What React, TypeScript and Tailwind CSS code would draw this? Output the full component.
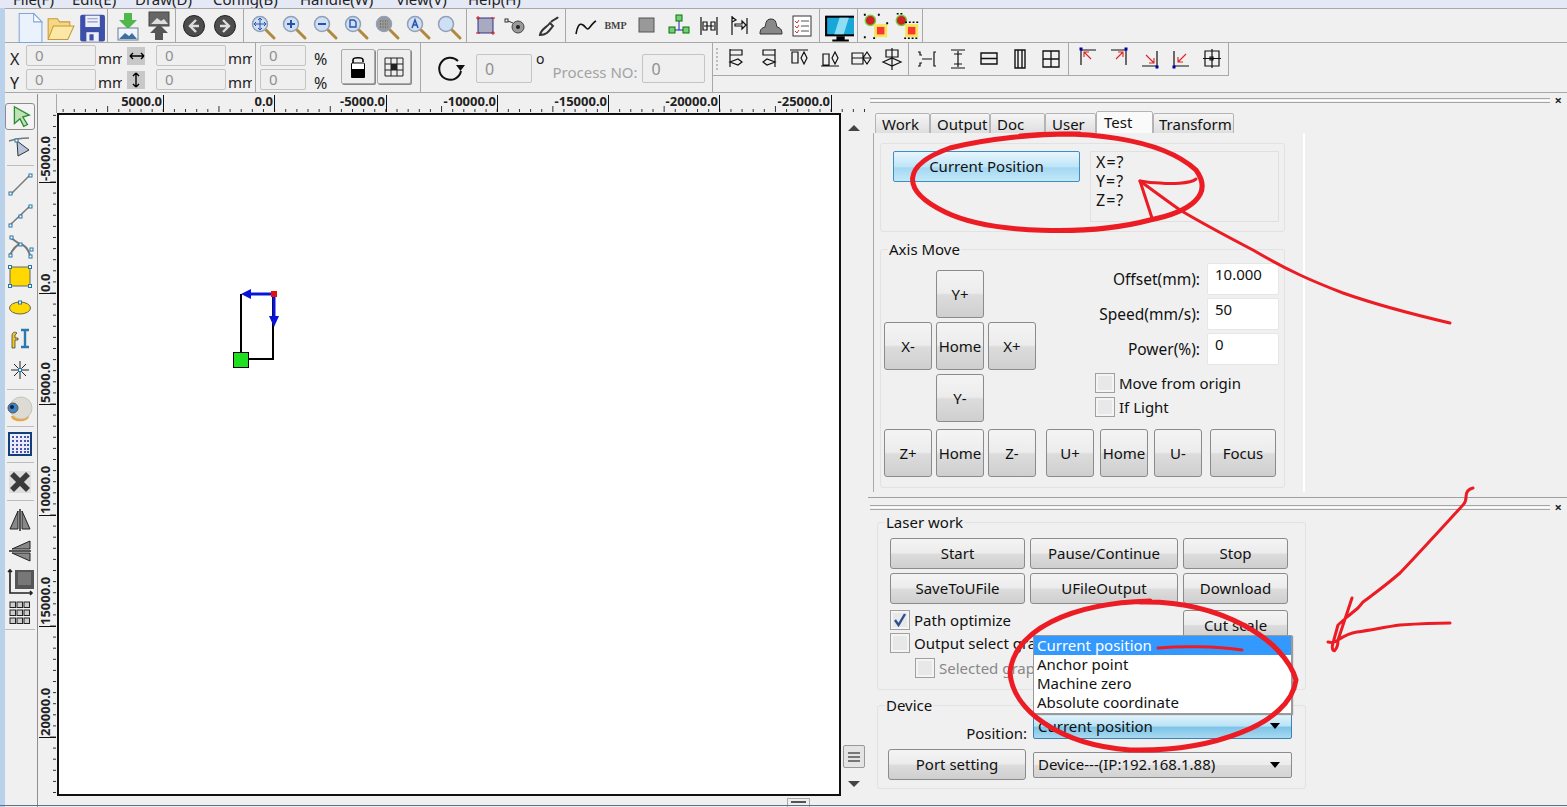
import type { ReactNode } from "react";

const BTN =
  "flex items-center justify-center rounded-[3px] border border-[#8b8b8b] bg-[linear-gradient(#f4f4f4_0%,#ececec_48%,#dcdcdc_52%,#cfcfcf_100%)] text-[#111] leading-none";

// ---------- toolbar icons ----------
const Svg = ({ children, s = 30 }: { children: ReactNode; s?: number }) => (
  <svg width={s} height={s} viewBox="0 0 30 30" fill="none">
    {children}
  </svg>
);

const Mag = ({ inner, color = "#cfe0f5" }: { inner?: ReactNode; color?: string }) => (
  <Svg>
    <path d="M19 19l8 8" stroke="#b08a3c" strokeWidth="3" strokeLinecap="round" />
    <circle cx="13" cy="13" r="7.5" fill={color} stroke="#8fa0b8" strokeWidth="1.5" />
    {inner}
  </Svg>
);

const Plain = ({ d, w = 1.2 }: { d: string; w?: number }) => (
  <Svg>
    <path d={d} stroke="#111" strokeWidth={w} />
  </Svg>
);

const Corner = ({ d, dot, arrow }: { d: string; dot: [number, number]; arrow: string }) => (
  <Svg>
    <path d={d} stroke="#111" strokeWidth="1.2" />
    <path d={arrow} stroke="#d22" strokeWidth="1.1" />
    <rect x={dot[0] - 1.5} y={dot[1] - 1.5} width="3" height="3" fill="#00a" />
  </Svg>
);

const icons: Record<string, ReactNode> = {
  new: (
    <Svg s={34}>
      <path d="M6 3h14l8 8v20H6z" fill="#eaf3fd" stroke="#7fa6d6" />
      <path d="M20 3v8h8z" fill="#fff" stroke="#7fa6d6" />
    </Svg>
  ),
  open: (
    <Svg s={34}>
      <path d="M4 27V8h9l2 3h10v4" fill="#f5d784" stroke="#c69a3a" />
      <path d="M4 28l5-13h20l-6 13z" fill="#fbe7a6" stroke="#c69a3a" />
    </Svg>
  ),
  save: (
    <Svg s={34}>
      <rect x="5" y="4" width="24" height="26" rx="2" fill="#3d4fa8" />
      <rect x="10" y="5" width="14" height="11" fill="#eef0f8" />
      <path d="M12 8h10M12 11h10" stroke="#8b95c8" />
      <rect x="11" y="21" width="12" height="9" fill="#eef0f8" />
      <rect x="14" y="23" width="4" height="6" fill="#3d4fa8" />
    </Svg>
  ),
  imp: (
    <Svg>
      <path d="M11 2h8v7h5l-9 9-9-9h5z" fill="#4fb84a" />
      <rect x="5" y="17" width="20" height="12" fill="#eef4fb" stroke="#6b7a8c" />
      <path d="M6 28l6-6 4 3 3-3 5 6z" fill="#3f6f9f" />
    </Svg>
  ),
  exp: (
    <Svg>
      <rect x="5" y="1" width="20" height="14" fill="#666" stroke="#444" />
      <path d="M7 13l6-6 4 3 3-2 4 5z" fill="#ddd" />
      <path d="M15 13l9 9h-5v7h-8v-7H6z" fill="#555" />
    </Svg>
  ),
  back: (
    <Svg>
      <circle cx="15" cy="15" r="10.5" fill="#4d4d4d" stroke="#222" />
      <path d="M17 9l-6 6 6 6M11 15h9" stroke="#ddd" strokeWidth="2.4" />
    </Svg>
  ),
  fwd: (
    <Svg>
      <circle cx="15" cy="15" r="10.5" fill="#4d4d4d" stroke="#222" />
      <path d="M13 9l6 6-6 6M19 15h-9" stroke="#ddd" strokeWidth="2.4" />
    </Svg>
  ),
  z1: <Mag inner={<path d="M13 8v10M8 13h10M11 9l2-2 2 2M11 17l2 2 2-2M9 11l-2 2 2 2M17 11l2 2-2 2" stroke="#2a52a8" />} />,
  z2: <Mag inner={<path d="M9 13h8M13 9v8" stroke="#2a52a8" strokeWidth="2" />} />,
  z3: <Mag inner={<path d="M9 13h8" stroke="#2a52a8" strokeWidth="2" />} />,
  z4: <Mag inner={<path d="M10 9h4l2 2v5h-6z" stroke="#2a52a8" strokeWidth="1.4" />} />,
  z5: <Mag color="#999" inner={<path d="M9 10h8M9 13h8M9 16h8" stroke="#555" strokeDasharray="1 1.5" />} />,
  z6: <Mag inner={<path d="M10 17l3-8 3 8M11 14h4" stroke="#2a52a8" strokeWidth="1.5" />} />,
  z7: <Mag />,
  sel: (
    <Svg>
      <rect x="7" y="7" width="15" height="15" fill="#a9a9c0" stroke="#33338a" />
      <path d="M5 7h4M7 5v4M20 22h4M22 20v4M20 7h4M5 22h4" stroke="#c22" />
    </Svg>
  ),
  spot: (
    <Svg>
      <rect x="3" y="8" width="3" height="3" stroke="#333" />
      <path d="M6 10l5 2" stroke="#333" />
      <circle cx="16" cy="16" r="6" fill="#999" stroke="#444" />
      <circle cx="16" cy="16" r="2" fill="#222" />
    </Svg>
  ),
  brush: (
    <Svg>
      <path d="M7 24c1-6 6-7 10-12l3 3c-4 5-6 9-13 9zM18 11c3-3 6-3 7-5" stroke="#333" strokeWidth="2" />
    </Svg>
  ),
  curve: <Plain d="M6 23c1-6 3-12 7-9s4 6 7 2 4-5 6-6" w={1.6} />,
  square: (
    <Svg>
      <rect x="7" y="7" width="15" height="14" fill="#999" stroke="#555" />
    </Svg>
  ),
  tree: (
    <Svg>
      <rect x="13" y="4" width="6" height="6" fill="#7c7" stroke="#070" />
      <rect x="6" y="16" width="6" height="6" fill="#7c7" stroke="#070" />
      <rect x="20" y="16" width="6" height="6" fill="#7c7" stroke="#070" />
      <path d="M16 10v9M12 19h8" stroke="#22a" />
    </Svg>
  ),
  dist: <Plain d="M7 6v18M23 6v18M10 15h10M9 11h4v8H9zM17 11h4v8h-4z" />,
  flag: <Plain d="M7 5v19M22 7v16M7 6l4 3-4 2M10 13h7v-3l4 4-4 4v-3h-7z" />,
  stamp: (
    <Svg>
      <path d="M4 23c0-5 2-6 5-7 1-2 0-8 6-8s5 6 6 8c3 1 5 2 5 7z" fill="#888" stroke="#333" />
    </Svg>
  ),
  check: (
    <Svg>
      <rect x="6" y="5" width="18" height="20" fill="#fff" stroke="#333" />
      <path d="M8 10l2 2 2-3M8 15l2 2 2-3M8 20l2 2 2-3" stroke="#c33" />
      <path d="M14 10h8M14 15h8M14 20h8" stroke="#555" />
    </Svg>
  ),
  monitor: (
    <Svg s={34}>
      <rect x="3" y="6" width="28" height="18" fill="#18a7d8" stroke="#000" strokeWidth="2" />
      <path d="M16 7l9 0-5 16h-9z" fill="#8fdcf5" />
      <path d="M13 25h8v3h4v2H9v-2h4z" fill="#000" />
    </Svg>
  ),
  node1: (
    <Svg s={28}>
      <circle cx="9" cy="9" r="5.500" fill="#c22" stroke="#7c4" strokeWidth="1.5" />
      <rect x="13" y="13" width="14" height="14" fill="#f6e55c" />
      <rect x="16" y="16" width="8" height="8" fill="#f33" />
      <path d="M2 3h2M17 3h2M2 27h2M12 28h2M26 12h2" stroke="#000" strokeWidth="2" />
    </Svg>
  ),
  node2: (
    <Svg s={28}>
      <circle cx="9" cy="9" r="5.500" fill="#c22" stroke="#7c4" strokeWidth="1.5" />
      <rect x="13" y="13" width="14" height="14" fill="#f6e55c" />
      <rect x="16" y="16" width="8" height="8" fill="#f33" />
      <path d="M4 2h8M13 11h15M12 28h16" stroke="#000" strokeWidth="1.6" strokeDasharray="2 2" />
    </Svg>
  ),
  a1: <Plain d="M8 5v18M8 6h12v5H8M8 18l8-3 4 3-4 3z" />,
  a2: <Plain d="M22 5v18M22 6H10v5h12M22 18l-8-3-4 3 4 3z" />,
  a3: <Plain d="M6 6h18M8 8h6v11H8zM20 8l3 6-3 6-3-6z" />,
  a4: <Plain d="M6 22h18M8 10h6v11H8zM20 8l3 6-3 6-3-6z" />,
  a5: <Plain d="M6 9h11v11H6zM6 14h18M21 8l4 6-4 6-4-6z" />,
  a6: <Plain d="M15 4v22M9 6h12v7H9zM6 18l9-4 9 4-9 4z" />,
  s1: <Plain d="M6 8l2 0v3h2M6 22l2 0v-3h2M24 8h-2v14h2M10 15h10" />,
  s2: <Plain d="M8 6h14M8 24h14M15 7v16M11 10h8M11 20h8" />,
  s3: <Plain d="M7 9h16v11H7zM7 14.5h16" w={1.4} />,
  s4: <Plain d="M10 6h10v18H10zM13 6v18M17 6v18" w={1.4} />,
  s5: <Plain d="M7 7h16v16H7zM15 7v16M7 15h16M12 15h6M15 12v6" w={1.3} />,
  c1: <Corner d="M8 5v16M8 6h15" dot={[8, 5]} arrow="M18 15l-7-7M11 13V8h5" />,
  c2: <Corner d="M22 5v16M7 6h15" dot={[22, 5]} arrow="M12 15l7-7M14 8h5v5" />,
  c3: <Corner d="M22 7v16M7 22h15" dot={[22, 23]} arrow="M11 11l8 8M19 14v5h-5" />,
  c4: <Corner d="M8 7v16M8 22h15" dot={[8, 23]} arrow="M20 10l-8 8M12 13v5h5" />,
  c5: <Plain d="M8 7h14v15H8zM15 5v19M6 14.5h18M13 13h3v3h-3z" />,
  arrow: (
    <Svg>
      <path d="M9 4l16 9-7 2 5 8-4 2-4-8-6 5z" fill="#bfe3b4" stroke="#2c8a34" strokeWidth="1.4" />
    </Svg>
  ),
  node: (
    <Svg>
      <path d="M12 8l12 9-11 6z" fill="#b8c4dc" stroke="#333" />
      <path d="M4 8c6-2 13-3 20-3" stroke="#777" strokeWidth="1.5" />
      <rect x="10" y="6" width="3" height="3" fill="#fff" stroke="#27a" />
    </Svg>
  ),
  line: (
    <Svg>
      <path d="M6 25L25 6" stroke="#777" strokeWidth="1.5" />
      <rect x="4" y="23" width="3" height="3" fill="#fff" stroke="#27a" />
      <rect x="24" y="5" width="3" height="3" fill="#fff" stroke="#27a" />
    </Svg>
  ),
  poly: (
    <Svg>
      <path d="M5 25L25 6" stroke="#777" strokeWidth="1.5" />
      {[[4, 24], [14, 15], [24, 5]].map(([x, y]) => (
        <rect key={x} x={x} y={y} width="3" height="3" fill="#fff" stroke="#27a" />
      ))}
    </Svg>
  ),
  cross: (
    <Svg>
      <path d="M5 24c3-6 7-10 10-11 5 1 8 5 10 11M6 7l10 7" stroke="#777" strokeWidth="2" />
      {[[4, 23], [5, 5], [14, 12], [25, 17], [24, 24]].map(([x, y]) => (
        <rect key={x + "-" + y} x={x} y={y} width="3" height="3" fill="#fff" stroke="#27a" />
      ))}
    </Svg>
  ),
  rect: (
    <Svg>
      <rect x="5" y="5" width="20" height="19" fill="#ffd800" stroke="#667" />
      {[[3.5, 3.5], [23.5, 3.5], [3.5, 22.5], [23.5, 22.5]].map(([x, y]) => (
        <rect key={x + "-" + y} x={x} y={y} width="3" height="3" fill="#fff" stroke="#27a" />
      ))}
    </Svg>
  ),
  ellipse: (
    <Svg>
      <ellipse cx="15" cy="15" rx="10.5" ry="6" fill="#ffd800" stroke="#665" />
      <rect x="13.5" y="8" width="3" height="3" fill="#fff" stroke="#27a" />
    </Svg>
  ),
  text: (
    <Svg>
      <path d="M12 9c-3-2-5 0-5 3v12h3v-8h3v-2h-3v-3z" fill="#f0c828" stroke="#333" strokeWidth=".7" />
      <path d="M16 6h8M16 23h8M20 6v17" stroke="#2a7ab0" strokeWidth="2.4" />
    </Svg>
  ),
  star: (
    <Svg>
      <path d="M15 6v18M6 15h18M9 9l12 12M21 9L9 21" stroke="#222" />
      <rect x="13.5" y="13.5" width="3" height="3" fill="#fff" stroke="#27a" />
    </Svg>
  ),
  camera: (
    <Svg>
      <path d="M6 21c0 7 18 7 18 0z" fill="#f0a53a" />
      <circle cx="16" cy="13" r="11" fill="#dcdcd4" stroke="#c4c4bc" />
      <circle cx="8" cy="13" r="5" fill="#3f83c8" stroke="#555" />
      <circle cx="7" cy="12" r="2" fill="#123" />
    </Svg>
  ),
  grid: (
    <svg width="24" height="24" viewBox="0 0 24 24">
      <rect x="1" y="1" width="22" height="22" fill="#e9ecf8" stroke="#123f7c" strokeWidth="2" />
      {[5, 9, 13, 17, 20].flatMap((x) =>
        [5, 9, 13, 17, 20].map((y) => <rect key={x + "-" + y} x={x - 1} y={y - 1} width="2" height="2" fill="#4a55a8" />),
      )}
    </svg>
  ),
  del: (
    <Svg>
      <rect x="4" y="4" width="22" height="22" fill="#ddd" />
      <path d="M7 7l16 16M23 7L7 23" stroke="#3a3a3a" strokeWidth="5.5" />
    </Svg>
  ),
  mirrorH: (
    <Svg>
      <path d="M15 4v22" stroke="#222" strokeWidth="1.5" />
      <path d="M13 6v18H5zM17 6v18h8z" fill="#888" stroke="#222" />
    </Svg>
  ),
  mirrorV: (
    <Svg>
      <path d="M4 15h22" stroke="#222" strokeWidth="1.5" />
      <path d="M25 5v8H7zM25 17v8L7 17z" fill="#888" stroke="#222" />
    </Svg>
  ),
  matrix: (
    <Svg>
      <rect x="10" y="3" width="19" height="19" fill="#555" />
      <rect x="13" y="5" width="13" height="13" fill="#777" />
      <path d="M5 3v23h22M3 5l2-2 2 2M25 24l2 2-2 2" stroke="#222" strokeWidth="1.6" />
    </Svg>
  ),
  array: (
    <svg width="22" height="24" viewBox="0 0 22 24">
      {[1, 8, 15].flatMap((x) =>
        [1, 9, 17].map((y) => <rect key={x + "-" + y} x={x} y={y} width="5.5" height="5.5" fill="#ccc" stroke="#222" />),
      )}
    </svg>
  ),
};

const Tool = ({ name }: { name: string }) => (
  <div className="flex h-full w-[31px] shrink-0 items-center justify-center">{icons[name]}</div>
);

const Sep = ({ className }: { className: string }) => <div className={`w-px shrink-0 self-stretch bg-[#a8a8a8] ${className}`} />;

// ---------- form bits ----------
const Grey = ({ v, className }: { v: string; className: string }) => (
  <div className={`flex items-center rounded-[2px] border border-[#c4c4c4] bg-[#efefef] pl-2 text-[#8f8f8f] ${className}`}>{v}</div>
);

const Check = ({ label, on, dim, className = "" }: { label: string; on?: boolean; dim?: boolean; className?: string }) => (
  <div className={`flex items-center gap-[4px] leading-[20px] ${className}`}>
    <div className="flex h-5 w-5 shrink-0 items-center justify-center border border-[#a0a0a0] bg-[#e8e8e8] shadow-[inset_0_0_0_2px_#f4f4f4]">
      {on && (
        <svg width="14" height="14" viewBox="0 0 14 14">
          <path d="M2 7l3.5 5L12 1" stroke="#2f4f8f" strokeWidth="2.4" fill="none" />
        </svg>
      )}
    </div>
    <span className={dim ? "whitespace-nowrap text-[#888]" : "whitespace-nowrap text-[#111]"}>{label}</span>
  </div>
);

const Group = ({ title, className, children }: { title?: string; className: string; children: ReactNode }) => (
  <div className={`relative rounded-[3px] border border-[#e2e2e2] ${className}`}>
    {title && <span className="absolute -top-[10px] left-[7px] bg-[#f0f0f0] px-[1px] leading-[18px] text-[#111]">{title}</span>}
    {children}
  </div>
);

const Square = ({ t }: { t: string }) => <button className={`${BTN} h-12 w-12 px-0 text-[15px]`}>{t}</button>;

const Field = ({ label, v }: { label: string; v: string }) => (
  <div className="flex h-[32px] items-center justify-end gap-[7px]">
    <span className="mt-[2px] text-[15.5px] text-[#111]">{label}</span>
    <div className="h-[32px] w-[72px] rounded-[2px] border border-[#e6e6e6] bg-white pl-[7px] leading-[20px] text-[#111]">{v}</div>
  </div>
);

const Combo = ({ t, blue, className }: { t: string; blue?: boolean; className: string }) => (
  <div
    className={`flex h-[26px] w-[259px] items-center justify-between rounded-[2px] border pl-1 pr-[11px] text-[#111] ${className} ${
      blue
        ? "border-[#3b82b5] bg-[linear-gradient(#e6f5fc_0%,#b9e2f5_50%,#7cc4e8_55%,#a9d9f0_100%)]"
        : "border-[#8b8b8b] bg-[linear-gradient(#f4f4f4_0%,#ececec_48%,#dcdcdc_52%,#d4d4d4_100%)]"
    }`}
  >
    <span>{t}</span>
    <span className="h-0 w-0 border-x-[5px] border-t-[6px] border-x-transparent border-t-black" />
  </div>
);

const Grips = ({ className }: { className: string }) => (
  <div className={`flex items-center pl-[2px] pr-[5px] ${className}`}>
    <div className="flex-1 border-y border-[#a6a6a6] py-[1px]">
      <div className="h-[1px] bg-white" />
    </div>
    <span className="ml-[5px] text-[13px] font-bold leading-none text-[#222]">×</span>
  </div>
);

const menus = [
  ["File(F)", "w-[59px]"],
  ["Edit(E)", "w-[63px]"],
  ["Draw(D)", "w-[78px]"],
  ["Config(B)", "w-[87px]"],
  ["Handle(W)", "w-[96px]"],
  ["View(V)", "w-[72px]"],
  ["Help(H)", "w-[72px]"],
];

const hMajors = [
  { x: 106, t: "5000.0" },
  { x: 217, t: "0.0" },
  { x: 329, t: "-5000.0" },
  { x: 440, t: "-10000.0" },
  { x: 551, t: "-15000.0" },
  { x: 662, t: "-20000.0" },
  { x: 774, t: "-25000.0" },
];
const vMajors = [
  { y: 69, t: "-5000.0" },
  { y: 180, t: "0.0" },
  { y: 291, t: "5000.0" },
  { y: 402, t: "10000.0" },
  { y: 513, t: "15000.0" },
  { y: 624, t: "20000.0" },
];

const HRuler = () => (
  <svg width="809" height="19" className="block">
    {Array.from({ length: 74 }, (_, i) => {
      const x = -5 + i * 11.13;
      const tall = i % 5 === 0 && i % 10 !== 0;
      return <path key={i} d={`M${x} ${tall ? 12 : 15}V18`} stroke="#333" />;
    })}
    {hMajors.map((m) => (
      <g key={m.x}>
        <path d={`M${m.x + 0.5} 1V18`} stroke="#111" />
        <text x={m.x - 1} y={12} textAnchor="end" fontSize="13" fontWeight="700" fill="#222" fontFamily="Noto Sans, sans-serif">
          {m.t}
        </text>
      </g>
    ))}
  </svg>
);

const VRuler = () => (
  <svg width="19" height="683" className="block">
    {Array.from({ length: 62 }, (_, i) => {
      const y = 2.4 + i * 11.1;
      const tall = i % 5 === 1 && i % 10 !== 1;
      return <path key={i} d={`M${tall ? 12 : 15} ${y}H18`} stroke="#333" />;
    })}
    {vMajors.map((m) => (
      <g key={m.y}>
        <path d={`M1 ${m.y + 0.5}H18`} stroke="#111" />
        <text
          transform={`translate(12 ${m.y - 1}) rotate(-90)`}
          fontSize="13"
          fontWeight="700"
          fill="#222"
          fontFamily="Noto Sans, sans-serif"
        >
          {m.t}
        </text>
      </g>
    ))}
  </svg>
);

export default function App() {
  return (
    <div className="relative flex h-[807px] w-[1567px] flex-col overflow-hidden bg-[#f0f0f0] font-['Noto_Sans',sans-serif] text-[15px]">
      {/* menu, cut off by the top of the picture */}
      <div className="flex h-[8px] shrink-0 items-end overflow-hidden bg-[#e4e9f5] pb-[3px] pl-[13px] leading-[12px] text-[#222]">
        {menus.map(([t, w]) => (
          <span key={t} className={`shrink-0 ${w}`}>
            {t}
          </span>
        ))}
      </div>

      <div className="flex min-h-0 flex-1">
        <div className="w-[5px] shrink-0 bg-[#b9d1ea]" />

        <div className="flex min-w-0 flex-1 flex-col">
          {/* main toolbar */}
          <div className="flex h-[35px] shrink-0 items-center border-y border-[#a8a8a8] pl-[8px]">
            {["new", "open", "save"].map((n) => <Tool key={n} name={n} />)}
            <Sep className="ml-px mr-1" />
            {["imp", "exp"].map((n) => <Tool key={n} name={n} />)}
            <Sep className="ml-px mr-[2px]" />
            {["back", "fwd"].map((n) => <Tool key={n} name={n} />)}
            <Sep className="ml-[3px] mr-[2px]" />
            {["z1", "z2", "z3", "z4", "z5", "z6", "z7"].map((n) => <Tool key={n} name={n} />)}
            <Sep className="ml-[3px] mr-[3px]" />
            {["sel", "spot", "brush"].map((n) => <Tool key={n} name={n} />)}
            <Sep className="ml-[2px] mr-[3px]" />
            <Tool name="curve" />
            <div className="flex h-full w-[31px] shrink-0 items-center justify-center font-['Liberation_Serif',serif] text-[10px] font-bold text-[#444]">BMP</div>
            {["square", "tree", "dist", "flag", "stamp", "check"].map((n) => <Tool key={n} name={n} />)}
            <Sep className="ml-[2px] mr-[3px]" />
            <Tool name="monitor" />
            <Sep className="ml-[3px] mr-[2px]" />
            {["node1", "node2"].map((n) => <Tool key={n} name={n} />)}
            <Sep className="ml-0 mr-0" />
          </div>

          {/* coordinates row */}
          <div className="flex h-[50px] shrink-0 border-b border-[#a8a8a8] text-[#222]">
            <div className="flex w-[250px] shrink-0 flex-col gap-[3px] pt-[2px]">
              {[
                ["X", "M3 9h14M3 9l3-3M3 9l3 3M17 9l-3-3M17 9l-3 3"],
                ["Y", "M9 2v14M9 2l-3 3M9 2l3 3M9 16l-3-3M9 16l3-3"],
              ].map(([l, d]) => (
                <div key={l} className="flex h-[21px] items-center">
                  <span className="mt-[6px] w-[21px] pl-[5px] text-[16px]">{l}</span>
                  <Grey v="0" className="h-[21px] w-[70px]" />
                  <span className="mt-[5px] w-[31px] overflow-hidden whitespace-nowrap pl-[2px]">
                    <span className="inline-block w-[24px] overflow-hidden align-bottom">mm</span>
                  </span>
                  <div className="flex h-[18px] w-[18px] items-center justify-center bg-[#c8c8c8]">
                    <svg width="18" height="18" viewBox="0 0 18 18" fill="none">
                      <path d={d} stroke="#000" strokeWidth="1.4" />
                    </svg>
                  </div>
                  <Grey v="0" className="ml-[11px] h-[21px] w-[70px]" />
                  <span className="mt-[5px] w-[29px] overflow-hidden pl-[2px]">
                    <span className="inline-block w-[24px] overflow-hidden align-bottom">mm</span>
                  </span>
                </div>
              ))}
            </div>
            <Sep className="" />
            <div className="ml-[4px] flex w-[81px] shrink-0 flex-col gap-[3px] pt-[2px]">
              {["a", "b"].map((k) => (
                <div key={k} className="flex h-[21px] items-center">
                  <Grey v="0" className="h-[21px] w-[46px]" />
                  <span className="ml-2 mt-[6px] text-[16px]">%</span>
                </div>
              ))}
            </div>
            <div className="flex gap-[2px] pt-[6px]">
              <button className="flex h-[35px] w-[34px] items-center justify-center rounded-[2px] border border-[#aaa] bg-[#eee] shadow-[1px_1px_0_#888]">
                <svg width="20" height="24" viewBox="0 0 20 24" fill="none">
                  <path d="M5 11V5c0-3 10-3 10 0v2" stroke="#000" strokeWidth="1.6" />
                  <rect x="3.500" y="8" width="13" height="14" rx="1" fill="#fff" stroke="#000" />
                  <rect x="3" y="14" width="14" height="9" rx="1" fill="#000" />
                </svg>
              </button>
              <button className="flex h-[35px] w-[34px] items-center justify-center rounded-[2px] border border-[#aaa] bg-[#eee] shadow-[1px_1px_0_#888]">
                <svg width="20" height="20" viewBox="0 0 20 20" fill="none">
                  <path d="M1 1h18v18H1zM7 1v18M13 1v18M1 7h18M1 13h18" stroke="#222" />
                  <rect x="7" y="7" width="6" height="6" fill="#222" />
                </svg>
              </button>
            </div>
            <Sep className="ml-[9px] mr-[15px]" />
            <div className="flex w-[40px] shrink-0 items-center pt-[3px]">
              <svg width="30" height="30" viewBox="0 0 30 30" fill="none">
                <path d="M22 7a11 11 0 1 0 3 10" stroke="#111" strokeWidth="2" />
                <path d="M20 11h9l-4.500 6z" fill="#111" />
              </svg>
            </div>
            <Grey v="0" className="mt-[11px] h-[29px] w-[56px] text-[16px]" />
            <span className="ml-[4px] mt-[6px] text-[14px] leading-[20px]">o</span>
            <span className="ml-[8px] mt-[19px] w-[90px] whitespace-nowrap text-[15px] leading-[20px] text-[#a3a3a3]">Process NO:</span>
            <Grey v="0" className="mt-[11px] h-[29px] w-[63px] text-[16px]" />
            <Sep className="ml-[7px]" />
            {/* align toolbar */}
            <div className="flex h-[33px] items-center self-start border-b border-r border-[#a8a8a8]">
              <div className="ml-[3px] mr-[3px] h-[22px] w-[2px] border-l-2 border-dotted border-[#bbb]" />
              {["a1", "a2", "a3", "a4", "a5", "a6"].map((n) => <Tool key={n} name={n} />)}
              <Sep className="ml-px mr-[2px]" />
              {["s1", "s2", "s3", "s4", "s5"].map((n) => <Tool key={n} name={n} />)}
              <Sep className="ml-[2px] mr-[3px]" />
              {["c1", "c2", "c3", "c4", "c5"].map((n) => <Tool key={n} name={n} />)}
              <div className="w-px" />
            </div>
          </div>

          <div className="flex min-h-0 flex-1">
            {/* drawing area */}
            <div className="flex w-[863px] shrink-0 pt-[1px]">
              <div className="flex w-[33px] shrink-0 flex-col items-center border-r border-[#8f8f8f] pr-[2px]">
                <div className="mt-[9px] flex h-[27px] w-[30px] shrink-0 items-center justify-center rounded-[3px] border border-[#8d8d8d] bg-[#f4f4f4]">{icons.arrow}</div>
                <div className="mt-[2px] flex h-[31px] shrink-0 items-center">{icons.node}</div>
                <div className="mb-[2px] mt-[2px] h-px w-[27px] shrink-0 bg-[#bcbcbc]" />
                {["line", "poly", "cross", "rect", "ellipse", "text", "star"].map((n) => (
                  <div key={n} className="flex h-[31px] shrink-0 items-center">{icons[n]}</div>
                ))}
                <div className="my-1 h-px w-[27px] shrink-0 bg-[#bcbcbc]" />
                <div className="flex h-[31px] shrink-0 items-center">{icons.camera}</div>
                <div className="my-px h-px w-[27px] shrink-0 bg-[#bcbcbc]" />
                <div className="flex h-[31px] shrink-0 items-center">{icons.grid}</div>
                <div className="my-[3px] h-px w-[27px] shrink-0 bg-[#bcbcbc]" />
                <div className="flex h-[31px] shrink-0 items-center">{icons.del}</div>
                <div className="my-[3px] h-px w-[27px] shrink-0 bg-[#bcbcbc]" />
                {["mirrorH", "mirrorV", "matrix", "array"].map((n) => (
                  <div key={n} className="flex h-[31px] shrink-0 items-center">{icons[n]}</div>
                ))}
                <div className="mt-[1px] h-px w-full shrink-0 bg-[#bcbcbc]" />
              </div>

              <div className="flex min-w-0 flex-1 flex-col">
                <div className="flex h-[19px] shrink-0">
                  <div className="w-[19px] shrink-0 border-r border-[#a8a8a8]" />
                  <HRuler />
                </div>
                <div className="flex min-h-0 flex-1">
                  <VRuler />
                  <div className="relative h-[683px] w-[784px] shrink-0 border-2 border-[#111] bg-white">
                    <svg width="100" height="100" className="absolute left-[170px] top-[170px]">
                      <path d="M12 9V74H44V9" stroke="#000" strokeWidth="2" fill="none" />
                      <rect x="4.500" y="67.500" width="15" height="15" fill="#1ee01e" stroke="#000" />
                      <path d="M44 9H20" stroke="#0a14d8" strokeWidth="3" />
                      <path d="M12 9l10-5v10z" fill="#0a14d8" />
                      <path d="M45 9v26" stroke="#0a14d8" strokeWidth="3" />
                      <path d="M45 42l-5-11h10z" fill="#0a14d8" />
                      <rect x="42" y="6" width="6" height="6" fill="#e01010" />
                    </svg>
                  </div>
                  <div className="flex w-[25px] shrink-0 flex-col items-center pt-[12px]">
                    <span className="h-0 w-0 border-x-[6px] border-b-[6px] border-x-transparent border-b-[#444]" />
                    <div className="mt-auto flex h-[23px] w-[22px] flex-col justify-center gap-[2px] rounded-[2px] border border-[#999] bg-[#e4e4e4] px-1">
                      <div className="h-[2px] bg-[#777]" />
                      <div className="h-[2px] bg-[#777]" />
                      <div className="h-[2px] bg-[#777]" />
                    </div>
                    <span className="mb-[9px] mt-[13px] h-0 w-0 border-x-[6px] border-t-[6px] border-x-transparent border-t-[#444]" />
                  </div>
                </div>
                <div className="flex h-[11px] shrink-0 justify-end pr-[58px]">
                  <div className="mt-[2px] h-[9px] w-[23px] border border-b-0 border-[#aaa] bg-[#eee] px-[3px] pt-[2px]">
                    <div className="h-[2px] bg-[#555]" />
                  </div>
                </div>
              </div>
            </div>

            {/* right side docks */}
            <div className="flex min-w-0 flex-1 flex-col pt-[4px]">
              <Grips className="h-[7px] shrink-0" />
              <div className="flex h-[394px] shrink-0 flex-col border-b border-[#a0a0a0]">
                <div className="ml-[7px] mt-[7px] flex h-[22px] shrink-0 items-start overflow-hidden text-[15px] leading-[20px] text-[#111]">
                  {[
                    ["Work", "w-[55px]"],
                    ["Output", "w-[60px]"],
                    ["Doc", "w-[55px]"],
                    ["User", "w-[51px]"],
                  ].map(([t, w]) => (
                    <div key={t} className={`mt-[2px] h-[26px] shrink-0 rounded-t-[2px] border border-[#b4b4b4] bg-[linear-gradient(#f5f5f5,#d8d8d8)] pl-[6px] ${w}`}>
                      {t}
                    </div>
                  ))}
                  <div className="h-[26px] w-[57px] shrink-0 rounded-t-[2px] border border-[#b4b4b4] bg-[#fafafa] pl-[7px]">Test</div>
                  <div className="mt-[2px] h-[26px] w-[81px] shrink-0 rounded-t-[2px] border border-[#b4b4b4] bg-[linear-gradient(#f5f5f5,#d8d8d8)] pl-[5px]">Transform</div>
                </div>
                <div className="mb-[5px] ml-[5px] flex min-h-0 w-[432px] flex-1 flex-col border-l border-r-2 border-l-[#aaa] border-r-white pl-[6px] pt-[10px]">
                  <Group className="flex h-[89px] w-[405px] shrink-0 gap-[10px] pl-[12px] pt-[7px]">
                    <button className="h-[31px] w-[187px] rounded-[2px] border border-[#3c8fc4] bg-[linear-gradient(#e8f6fd_0%,#bfe5f7_50%,#a3d8f2_55%,#c4e8f8_100%)] text-[15px] text-[#111]">
                      Current Position
                    </button>
                    <div className="h-[71px] w-[189px] border border-[#e0e0e0] pl-[5px] text-[16px] leading-[19px] tracking-[1px] text-[#111]">
                      <div className="mt-[1px]">X=?</div>
                      <div>Y=?</div>
                      <div>Z=?</div>
                    </div>
                  </Group>
                  <Group title="Axis Move" className="mt-[17px] h-[239px] w-[405px] shrink-0">
                    <div className="flex pl-[3px] pt-[20px]">
                      <div className="grid grid-cols-[48px_48px_48px] gap-x-1 gap-y-1">
                        <div />
                        <Square t="Y+" />
                        <div />
                        <Square t="X-" />
                        <Square t="Home" />
                        <Square t="X+" />
                        <div />
                        <Square t="Y-" />
                        <div />
                      </div>
                      <div className="ml-[59px] flex w-[184px] flex-col">
                        <div className="mt-[-7px] flex flex-col gap-[3px]">
                          <Field label="Offset(mm):" v="10.000" />
                          <Field label="Speed(mm/s):" v="50" />
                          <Field label="Power(%):" v="0" />
                        </div>
                        <Check label="Move from origin" className="mt-[8px]" />
                        <Check label="If Light" className="mt-1" />
                      </div>
                    </div>
                    <div className="mt-[7px] flex pl-[3px]">
                      <div className="grid grid-cols-[48px_48px_48px] gap-x-1">
                        <Square t="Z+" />
                        <Square t="Home" />
                        <Square t="Z-" />
                      </div>
                      <div className="ml-[10px] flex gap-[6px]">
                        <Square t="U+" />
                        <Square t="Home" />
                        <Square t="U-" />
                        <button className={`${BTN} ml-[2px] h-12 w-[66px] text-[15px]`}>Focus</button>
                      </div>
                    </div>
                  </Group>
                </div>
              </div>

              <Grips className="mt-[6px] h-[7px] shrink-0" />
              <div className="relative flex min-h-0 flex-1 flex-col pl-[9px] pt-[11px] text-[15px]">
                <Group title="Laser work" className="h-[168px] w-[429px] shrink-0 pl-[12px] pt-[15px]">
                  <div className="grid grid-cols-[135px_148px_105px] gap-x-[5px] gap-y-1">
                    {["Start", "Pause/Continue", "Stop", "SaveToUFile", "UFileOutput", "Download"].map((t) => (
                      <button key={t} className={`${BTN} h-[31px] text-[15px]`}>{t}</button>
                    ))}
                  </div>
                  <div className="mt-[6px] flex">
                    <div className="flex w-[293px] flex-col gap-[3px]">
                      <Check label="Path optimize" on />
                      <Check label="Output select graphics" />
                      <Check label="Selected graphics" dim className="ml-[25px] mt-[2px]" />
                    </div>
                    <button className={`${BTN} h-[30px] w-[105px] text-[15px]`}>Cut scale</button>
                  </div>
                </Group>
                <Group title="Device" className="mt-[15px] h-[84px] w-[429px] shrink-0">
                  <div className="h-[43px]" />
                  <div className="absolute left-[87px] top-[17px] w-[62px] text-right leading-[20px] text-[#111]">Position:</div>
                  <Combo t="Current position" blue className="absolute left-[155px] top-[7px]" />
                  <div className="flex items-center gap-[7px] pl-[10px]">
                    <button className={`${BTN} h-[31px] w-[138px] text-[15px]`}>Port setting</button>
                    <Combo t="Device---(IP:192.168.1.88)" className="" />
                  </div>
                </Group>

                {/* open combo list */}
                <div className="absolute left-[165px] top-[124px] z-10 h-[79px] w-[259px] border border-[#9a9a9a] bg-white text-[15px] leading-[19px] text-[#111] shadow-[1px_1px_1px_#999]">
                  <div className="bg-[#3399ff] pl-[3px] text-white">Current position</div>
                  <div className="pl-[3px]">Anchor point</div>
                  <div className="pl-[3px]">Machine zero</div>
                  <div className="pl-[3px]">Absolute coordinate</div>
                </div>
              </div>
            </div>
          </div>
        </div>
      </div>

      {/* bottom edge */}
      <div className="absolute bottom-[1px] left-0 h-px w-full bg-[#5d7285]" />

      {/* red marks drawn over the screenshot */}
      <svg width="1567" height="807" className="pointer-events-none absolute left-0 top-0 z-20" fill="none" stroke="#ec1c24" strokeLinecap="round" strokeLinejoin="round">
        <path strokeWidth="5" d="M1020 136C1080 130 1160 137 1196 170 1214 195 1190 212 1150 220 1090 236 990 234 945 212 900 190 902 165 950 148 985 139 1040 133 1080 134" />
        <path strokeWidth="3" d="M1196 179C1190 184 1170 184 1160 183 1150 183 1145 182 1140 181L1152 218" />
        <path strokeWidth="3" d="M1140 181C1155 192 1170 203 1180 210 1205 225 1230 238 1253 250 1270 260 1285 268 1300 275 1315 282 1330 288 1343 293 1380 306 1420 316 1450 323" />
        <path strokeWidth="5" d="M1140 602C1220 600 1285 640 1296 680 1290 725 1210 752 1130 750 1060 745 1012 710 1010 672 1015 630 1070 603 1150 601" />
        <path strokeWidth="3" d="M1158 648C1180 646 1215 646 1242 650" />
        <path strokeWidth="3" d="M1473 488C1468 489 1466 493 1466 497 1466 501 1465 503 1463 505 1440 530 1420 552 1400 573 1385 586 1375 593 1363 602L1358 608 1347 617 1338 625 1333 643C1331 650 1334 652 1335 650 1337 648 1338 644 1338 640L1352 598M1328 642C1333 643 1336 642 1338 640 1344 636 1350 633 1357 632 1372 630 1385 627 1400 625 1415 624 1432 623 1450 623" />
      </svg>
    </div>
  );
}
